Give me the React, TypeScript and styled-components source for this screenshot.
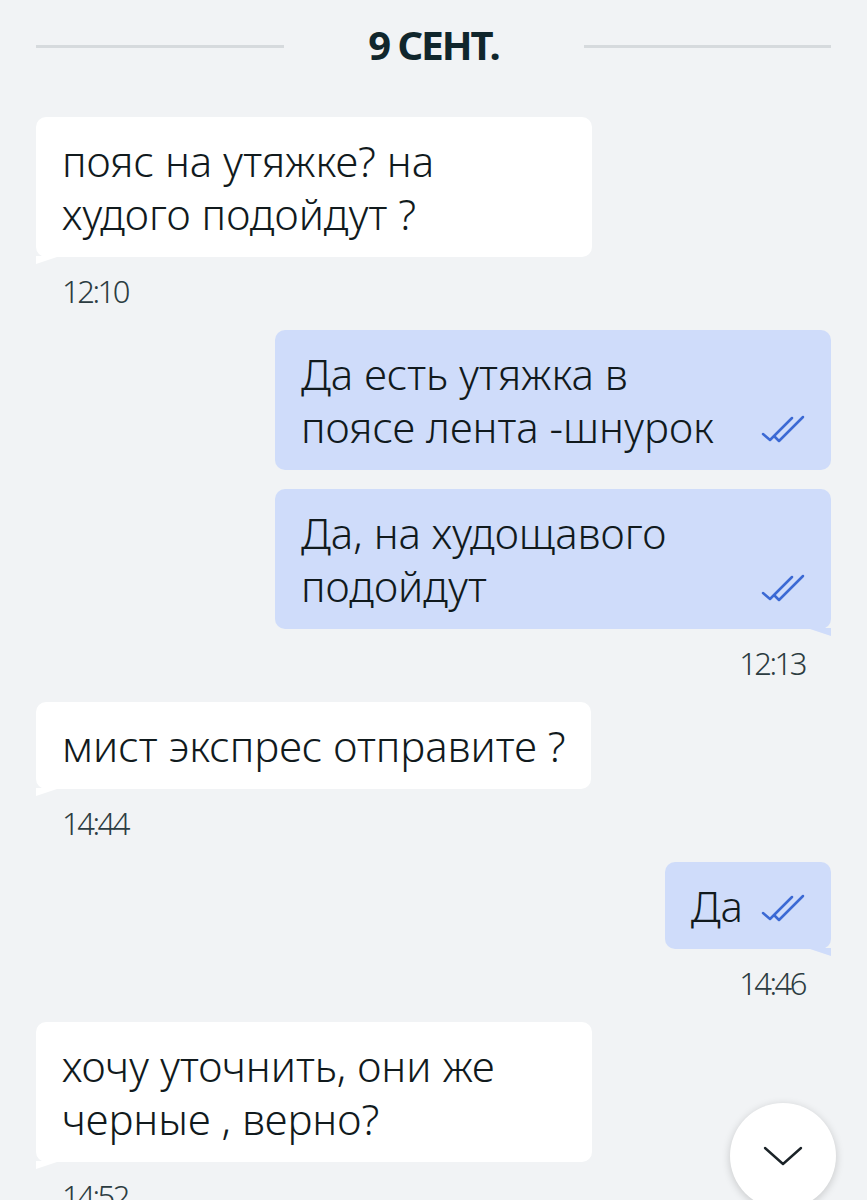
import React from "react";
import styled, { createGlobalStyle } from "styled-components";

const Global = createGlobalStyle`
  html, body { margin: 0; padding: 0; background: #f1f3f5; }
  body { font-family: "Noto Sans", "Open Sans", sans-serif; overflow: hidden; }
  * { box-sizing: border-box; }
`;

const Screen = styled.div`
  width: 867px;
  height: 1200px;
  background: #f1f3f5;
  position: relative;
  overflow: hidden;
  padding: 0 36px;
`;

const DateRow = styled.div`
  display: flex;
  align-items: center;
  height: 92px;
`;

const DateLine = styled.div`
  flex: 1;
  height: 3px;
  background: #d6dadd;
`;

const DateText = styled.div`
  width: 300px;
  text-align: center;
  font-size: 40px;
  font-weight: 700;
  color: #10262c;
  letter-spacing: -2px;
  padding-bottom: 4px;
`;

const Feed = styled.div`
  display: flex;
  flex-direction: column;
  padding-top: 25px;
`;

const Group = styled.div<{ $out?: boolean }>`
  display: flex;
  flex-direction: column;
  align-items: ${(p) => (p.$out ? "flex-end" : "flex-start")};
  gap: 19px;
`;

const Bubble = styled.div<{ $out?: boolean; $tail?: boolean; $wide?: boolean }>`
  position: relative;
  display: flex;
  align-items: flex-end;
  justify-content: space-between;
  width: ${(p) => (p.$wide ? "556px" : "auto")};
  max-width: 556px;
  padding: 17px 26px;
  border-radius: 10px;
  background: ${(p) => (p.$out ? "#cfdcfa" : "#ffffff")};
  ${(p) =>
    p.$tail
      ? `&::after {
    content: "";
    position: absolute;
    bottom: -7px;
    ${p.$out ? "right: 0;" : "left: 0;"}
    width: 24px;
    height: 8px;
    background: ${p.$out ? "#cfdcfa" : "#ffffff"};
    clip-path: ${p.$out ? "polygon(0 0, 100% 0, 100% 100%)" : "polygon(0 0, 100% 0, 0 100%)"};
  }`
      : ""}
`;

const BubbleText = styled.div`
  font-size: 42px;
  font-weight: 300;
  line-height: 53px;
  color: #111a1d;
  white-space: nowrap;
`;

const Check = styled.svg`
  flex: none;
  width: 44px;
  height: 28px;
  margin-left: 18px;
  margin-bottom: 10px;
`;

const Time = styled.div<{ $out?: boolean }>`
  align-self: ${(p) => (p.$out ? "flex-end" : "flex-start")};
  padding: 0 26px 5px;
  height: 73px;
  display: flex;
  align-items: center;
  font-size: 31px;
  font-weight: 300;
  color: #2c3c41;
  letter-spacing: -2.5px;
`;

const ScrollButton = styled.div`
  position: absolute;
  left: 730px;
  top: 1103px;
  width: 106px;
  height: 106px;
  border-radius: 50%;
  background: #ffffff;
  box-shadow: 0 2px 8px rgba(0, 0, 0, 0.18);
  display: flex;
  align-items: center;
  justify-content: center;
`;

const Ticks = () => (
  <Check viewBox="0 0 44 28" fill="none">
    <path d="M2 19 L9 25 L31 3" stroke="#3b69d4" strokeWidth="2.5" strokeLinecap="round" strokeLinejoin="round" />
    <path d="M14 22 L18 26 L42 2" stroke="#3b69d4" strokeWidth="2.5" strokeLinecap="round" strokeLinejoin="round" />
  </Check>
);

export default function App() {
  return (
    <>
      <Global />
      <Screen>
        <DateRow>
          <DateLine />
          <DateText>9 СЕНТ.</DateText>
          <DateLine />
        </DateRow>
        <Feed>
          <Group>
            <Bubble $tail $wide>
              <BubbleText>
                пояс на утяжке? на
                <br />
                худого подойдут ?
              </BubbleText>
            </Bubble>
          </Group>
          <Time>12:10</Time>
          <Group $out>
            <Bubble $out $wide>
              <BubbleText>
                Да есть утяжка в
                <br />
                поясе лента -шнурок
              </BubbleText>
              <Ticks />
            </Bubble>
            <Bubble $out $tail $wide>
              <BubbleText>
                Да, на худощавого
                <br />
                подойдут
              </BubbleText>
              <Ticks />
            </Bubble>
          </Group>
          <Time $out>12:13</Time>
          <Group>
            <Bubble $tail>
              <BubbleText>мист экспрес отправите ?</BubbleText>
            </Bubble>
          </Group>
          <Time>14:44</Time>
          <Group $out>
            <Bubble $out $tail>
              <BubbleText>Да</BubbleText>
              <Ticks />
            </Bubble>
          </Group>
          <Time $out>14:46</Time>
          <Group>
            <Bubble $tail $wide>
              <BubbleText>
                хочу уточнить, они же
                <br />
                черные , верно?
              </BubbleText>
            </Bubble>
          </Group>
          <Time>14:52</Time>
        </Feed>
        <ScrollButton>
          <svg width="44" height="26" viewBox="0 0 44 26" fill="none">
            <path d="M4 5 L22 21 L40 5" stroke="#1b2328" strokeWidth="2.4" strokeLinecap="round" strokeLinejoin="round" />
          </svg>
        </ScrollButton>
      </Screen>
    </>
  );
}
